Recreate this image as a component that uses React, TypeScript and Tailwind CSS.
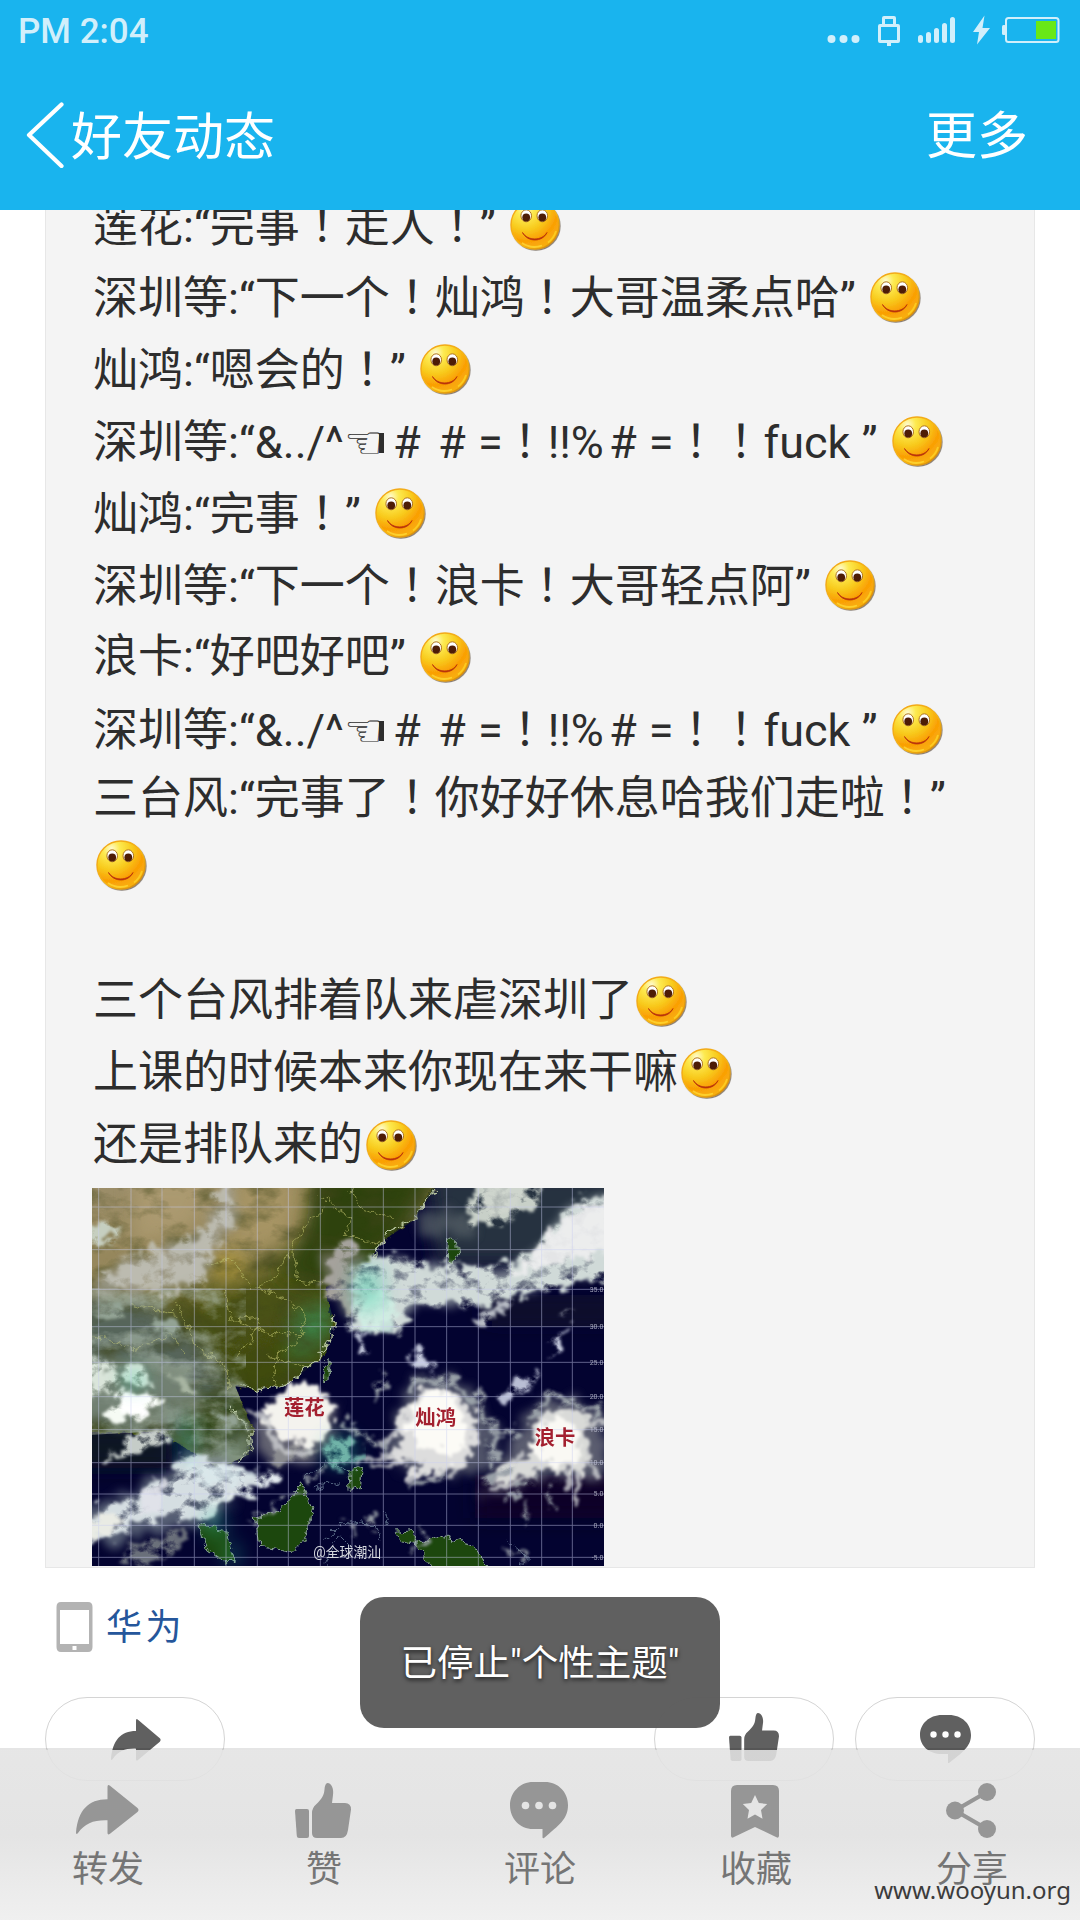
import React from "react";

const CJK = 'font-["Roboto","Noto_Sans_CJK_SC",sans-serif]';

/* ---------- status bar ---------- */

function StatusBar() {
  return (
    <div className="flex h-[60px] items-center justify-between pl-[18px] pr-[19px] pt-[2px] text-[#d1effb]">
      <span className="text-[35px] font-medium leading-none">PM 2:04</span>
      <svg width="234" height="34" viewBox="0 0 234 34" fill="currentColor">
        <circle cx="4.5" cy="25" r="4" />
        <circle cx="16.5" cy="25" r="4" />
        <circle cx="28.5" cy="25" r="4" />
        <path fillRule="evenodd" d="M57 2h10q2 0 2 2v6h2q2 0 2 2v15q0 2-2 2h-7v3h-4v-3h-7q-2 0-2-2V12q0-2 2-2h2V4q0-2 2-2zM58 5v5h8V5zM54 13v13h16V13z" />
        <rect x="91" y="21" width="5" height="8" rx="2.5" />
        <rect x="99" y="18" width="5" height="11" rx="2.5" />
        <rect x="107" y="14" width="5" height="15" rx="2.5" />
        <rect x="115" y="9" width="5" height="20" rx="2.5" />
        <rect x="123" y="3" width="5" height="26" rx="2.5" />
        <path d="M157.500 1.500 146 18h6l-2 12.500L163 14h-7.500z" />
        <rect x="175" y="11" width="4" height="10" rx="1.500" />
        <rect x="179" y="4" width="52.500" height="24" rx="2.500" fill="none" stroke="currentColor" strokeWidth="2" />
        <rect x="209" y="7" width="20" height="18" fill="#68e817" />
      </svg>
    </div>
  );
}

function TitleBar() {
  return (
    <div className="flex h-[150px] items-center justify-between pl-[26px] pr-[52px] text-[51px] leading-none text-white">
      <div className="flex items-center">
        <svg width="38" height="66" viewBox="0 0 38 66" fill="none" stroke="#fff" strokeWidth="4.200" strokeLinecap="round" strokeLinejoin="round">
          <path d="M35.500 2.500 3 33l32.500 31" />
        </svg>
        <span className="ml-[7px] pt-[4px]">好友动态</span>
      </div>
      <span className="pt-[3px]">更多</span>
    </div>
  );
}

/* ---------- post text ---------- */

function Smile() {
  return (
    <svg width="54" height="54" viewBox="0 0 54 54" className="shrink-0">
      <defs>
        <radialGradient id="face" cx="0.3" cy="0.16" r="0.88">
          <stop offset="0" stopColor="#fffbd0" />
          <stop offset="0.2" stopColor="#fdea50" />
          <stop offset="0.5" stopColor="#f8ca1c" />
          <stop offset="0.76" stopColor="#fa9f04" />
          <stop offset="1" stopColor="#f8b010" />
        </radialGradient>
        <linearGradient id="rim" x1="0" y1="0" x2="1" y2="1">
          <stop offset="0" stopColor="#f2a51a" />
          <stop offset="0.6" stopColor="#f6b512" />
          <stop offset="1" stopColor="#c87d08" />
        </linearGradient>
        <filter id="drop" x="-10%" y="-10%" width="130%" height="130%">
          <feDropShadow dx="0.8" dy="0.9" stdDeviation="0.7" floodColor="#4b3a2a" floodOpacity="0.7" />
        </filter>
      </defs>
      <circle cx="27" cy="27" r="24" fill="url(#face)" stroke="url(#rim)" strokeWidth="1.400" filter="url(#drop)" />
      <path d="M40 44.500A22 22 0 0 0 48 33" fill="none" stroke="#fdd82a" strokeWidth="1.800" opacity="0.7" />
      <path d="M14 45a22 22 0 0 0 20 2.500" fill="none" stroke="#ffe03a" strokeWidth="1.800" opacity="0.7" />
      <ellipse cx="18.200" cy="17.800" rx="5.300" ry="6" fill="#fff" stroke="#b0731c" strokeWidth="1" />
      <ellipse cx="34.300" cy="17.800" rx="5.300" ry="6" fill="#fff" stroke="#b0731c" strokeWidth="1" />
      <ellipse cx="18.200" cy="19.400" rx="3.900" ry="4" fill="#4d1c06" />
      <ellipse cx="34.300" cy="19.400" rx="3.900" ry="4" fill="#4d1c06" />
      <path d="M14.500 34.500c5 10 20 10 24.500 0-5 8.600-19.500 8.600-24.500 0z" fill="#b9320c" stroke="#b9320c" strokeWidth="0.800" strokeLinejoin="round" />
    </svg>
  );
}

/* Exclamation marks, hashes and the pointing hand sit in full-width cells. */
function Rich({ text }: { text: string }) {
  return (
    <span className="ml-px whitespace-pre pb-[2px]">
      {text.split(/([！＃☜])/).map((part, i) =>
        part === "！" ? (
          <span key={i} className='font-["Noto_Sans_CJK_TC",sans-serif]' lang="zh-TW">{part}</span>
        ) : part === "＃" ? (
          <span key={i} className="inline-block w-[45px] pr-[7px] text-center">#</span>
        ) : part === "☜" ? (
          <span key={i} className='relative inline-block w-[44px] pr-[5px] text-center font-["DejaVu_Sans",sans-serif] leading-none'>
            {part}
            <span className="absolute right-[4px] top-[13px] h-[20px] w-[5px] bg-[#2d2d2d]" />
          </span>
        ) : (
          part
        )
      )}
    </span>
  );
}

function Line({ text }: { text: string }) {
  return (
    <div className="flex h-[72px] items-center">
      <Rich text={text} />
      <span className="ml-px">
        <Smile />
      </span>
    </div>
  );
}

/* ---------- satellite picture ---------- */

const meridians = [20, 117, 210, 307, 402, 496, 589, 685, 780, 874, 969, 1064, 1159, 1255, 1349, 1441];
const parallels: [number, string][] = [
  [57, ""], [185, ""], [304, "35.0"], [416, "30.0"], [523, "25.0"], [626, "20.0"],
  [725, "15.0"], [824, "10.0"], [918, "5.0"], [1012, "0.0"], [1108, "-5.0"],
];

function Satellite() {
  return (
    <svg width="512" height="378" viewBox="0 0 1536 1134" preserveAspectRatio="none" className="block">
      <defs>
        <filter id="cloud" x="-10%" y="-10%" width="120%" height="120%">
          <feTurbulence type="fractalNoise" baseFrequency="0.02 0.026" numOctaves="5" seed="7" result="n" />
          <feDisplacementMap in="SourceGraphic" in2="n" scale="90" xChannelSelector="R" yChannelSelector="G" result="d" />
          <feGaussianBlur in="d" stdDeviation="5" result="b" />
          <feColorMatrix in="n" type="matrix" values="0 0 0 0 1  0 0 0 0 1  0 0 0 0 1  0 0 3.600 0 -0.850" result="m" />
          <feComposite in="b" in2="m" operator="in" />
        </filter>
        <filter id="soft" x="-10%" y="-10%" width="120%" height="120%">
          <feTurbulence type="fractalNoise" baseFrequency="0.034" numOctaves="4" seed="3" result="n" />
          <feDisplacementMap in="SourceGraphic" in2="n" scale="70" xChannelSelector="R" yChannelSelector="G" result="d" />
          <feGaussianBlur in="d" stdDeviation="5.500" />
        </filter>
        <filter id="veil" x="-20%" y="-20%" width="140%" height="140%">
          <feTurbulence type="fractalNoise" baseFrequency="0.02" numOctaves="4" seed="12" result="n" />
          <feDisplacementMap in="SourceGraphic" in2="n" scale="90" xChannelSelector="R" yChannelSelector="G" result="d" />
          <feGaussianBlur in="d" stdDeviation="14" />
        </filter>
        <filter id="streak" x="-10%" y="-10%" width="120%" height="120%">
          <feTurbulence type="fractalNoise" baseFrequency="0.03" numOctaves="3" seed="5" result="n" />
          <feDisplacementMap in="SourceGraphic" in2="n" scale="36" xChannelSelector="R" yChannelSelector="G" result="d" />
          <feGaussianBlur in="d" stdDeviation="4" />
        </filter>
        <filter id="rough" x="-5%" y="-5%" width="110%" height="110%">
          <feTurbulence type="fractalNoise" baseFrequency="0.04" numOctaves="3" seed="9" result="n" />
          <feDisplacementMap in="SourceGraphic" in2="n" scale="34" xChannelSelector="R" yChannelSelector="G" />
        </filter>
        <filter id="grain" x="0" y="0" width="100%" height="100%">
          <feTurbulence type="fractalNoise" baseFrequency="0.009 0.016" numOctaves="5" seed="21" />
          <feColorMatrix type="matrix" values="0 0 0 0 0.05  0 0 0 0 0.06  0 0 0 0 0.01  2.500 0 0 0 -1.100" />
        </filter>
        <filter id="wisps" x="0" y="0" width="100%" height="100%">
          <feTurbulence type="fractalNoise" baseFrequency="0.009 0.014" numOctaves="5" seed="40" />
          <feColorMatrix type="matrix" values="0 0 0 0 0.42  0 0 0 0 0.5  0 0 0 0 0.43  0 3.500 0 0 -1.500" />
        </filter>
        <filter id="haze" filterUnits="userSpaceOnUse" x="-200" y="-200" width="1936" height="1534">
          <feGaussianBlur stdDeviation="28" />
        </filter>
        <linearGradient id="land" x1="0.1" y1="0" x2="0.55" y2="1">
          <stop offset="0" stopColor="#9d8f6c" />
          <stop offset="0.34" stopColor="#938455" />
          <stop offset="0.5" stopColor="#4d5313" />
          <stop offset="1" stopColor="#2f420d" />
        </linearGradient>
        <clipPath id="landClip">
          <path d="M0 0H1030L960 100 870 160 830 220 700 300 725 400 700 500 600 580 500 605 430 595 480 720 470 800 380 840 280 780 200 730 0 740z" />
        </clipPath>
      </defs>

      <rect width="1536" height="1134" fill="#030330" />
      <path d="M1000-60h600v290H1040z" fill="#283040" filter="url(#haze)" />
      <path d="M1150 860h446v130H1150z" fill="#0c0326" filter="url(#haze)" />
      <path d="M1180 340h400v60h-400z" fill="#16162a" filter="url(#haze)" />
      <path d="M-60 720h300v120H-60z" fill="#101222" filter="url(#haze)" />

      {/* land masses */}
      <path d="M-60-60H1060L960 100 870 160 830 220 700 300 725 400 700 500 600 580 500 605 430 595 480 720 470 800 380 840 280 780 200 730-60 740z" fill="url(#land)" filter="url(#rough)" />
      <g clipPath="url(#landClip)">
        <path d="M660-60h400L860 230 700 300 560 260 640 130z" fill="#2f4208" filter="url(#haze)" />
        <path d="M-60 320 150 330 280 420 400 560 500 820 200 760-60 700z" fill="#56655a" filter="url(#haze)" />
        <path d="M280 620h160l30 100-80 60-110-40z" fill="#34491f" filter="url(#haze)" />
        <path d="M130-40h240l-60 160-190 60z" fill="#b8a47a" filter="url(#haze)" opacity="0.6" />
        <path d="M430-20h200l-40 180-180 60z" fill="#ab9868" filter="url(#haze)" opacity="0.8" />
        <path d="M370 200h80v70h-80z" fill="#b39a3a" filter="url(#haze)" />
        <path d="M600 380 720 340v100l-120 90z" fill="#3a8a52" filter="url(#haze)" opacity="0.8" />
        <rect width="1060" height="860" filter="url(#grain)" opacity="0.6" />
      </g>
      <g fill="#1f470c" stroke="#8aa295" strokeWidth="3" filter="url(#rough)">
        <path d="M490 985 560 970 630 890 660 960 640 1050 600 1090 500 1075z" />
        <path d="M320 1010 400 1030 430 1120 400 1125 340 1080z" />
        <path d="M970 1070 1040 1040 1140 1070 1200 1160H1040z" />
        <path d="M910 1030 960 1025 970 1070 920 1060z" />
        <path d="M1070 150 1095 155 1100 200 1085 230 1065 220z" />
        <path d="M770 850 810 840 805 900 775 910z" />
        <path d="M695 530 715 520 710 580 690 590z" />
      </g>

      {/* borders and coast lines */}
      <g fill="none" stroke="#b9bd6a" strokeWidth="2.600" opacity="0.75" filter="url(#rough)">
        <path d="M250 340 300 440 310 480 400 530 410 600M400 310 420 400 500 390 480 460 430 500M500 300 580 330 640 380 620 460 560 500 540 600M600 180 620 280 700 290M330 240 420 210 480 310M440 400 540 440 640 440M590 180 560 260 500 300M520 500 640 540" />
        <path d="M680 20 780 90 760 140 870 170M700 60 640 110 600 180M780 0 800 60 900 90" />
        <path d="M0 440 120 480 240 440 280 500M120 350 250 380" />
      </g>
      <path d="M1030 0 960 100 890 130 840 220M725 380 720 450 670 520 600 580 510 605 440 590M410 660 470 710 480 780 430 830" fill="none" stroke="#b8c6a0" strokeWidth="4" filter="url(#rough)" />
      <path d="M690 1060 760 1000 850 1010 870 1060M700 1130 740 1040 780 1080M640 870 700 820 770 850M1250 1060 1310 1110 1280 1134M880 970 890 1010M660 900 740 880" fill="none" stroke="#7c93a8" strokeWidth="3" opacity="0.7" filter="url(#rough)" />

      {/* thin cloud over the south-western land */}
      <g clipPath="url(#landClip)">
        <rect y="300" width="460" height="540" filter="url(#wisps)" opacity="0.6" />
      </g>

      {/* translucent cloud base */}
      <g filter="url(#veil)" opacity="0.72">
        <path d="M390-30 430-30 420 100 360 190 320 280 200 300 20 310 0 280 150 200 300 160 370 80z" fill="#a9a8a0" />
        <path d="M790 250 880 210 1000 240 1150 250 1270 240 1360 150 1440 60 1580 10V240L1400 280 1180 340 960 350 930 400 860 430 780 410z" fill="#a9b4b6" />
        <path d="M700 190 800 170 790 400 730 330 690 270z" fill="#86837d" />
        <path d="M-30 500 200 520 240 700 60 700-30 680z" fill="#7c8a7c" />
        <path d="M-30 970 130 900 240 850 290 780 440 830 440 920 340 1010 60 1060-30 1060z" fill="#76828e" />
        <path d="M930 610 1030 560 1150 610 1220 780 1180 850 960 860 880 820z" fill="#6f7480" />
        <path d="M1280 720 1340 640 1450 630 1560 690 1530 880 1380 860 1180 910 1220 850z" fill="#7d8088" />
        <path d="M480 700 560 640 740 640 720 760 640 820 520 820z" fill="#88888a" />
        <path d="M950 90 1120 60 1150 150 1000 150z" fill="#566068" />
        <path d="M180 520 280 540 340 660 260 680z" fill="#7d8b7b" />
        <path d="M370 760 460 740 460 800 400 820z" fill="#7f9482" />
      </g>

      {/* clouds */}
      <g filter="url(#cloud)">
        <path d="M390-30 430-30 420 100 370 180 320 290 230 310 60 300 30 260 150 190 300 160 370 80z" fill="#c3c3ba" opacity="0.8" />
        <path d="M-30 110 90 100 50 160-30 180z" fill="#c6cfc0" />
        <path d="M720 170 800 160 790 400 740 330 690 300z" fill="#a5a29c" />
        <path d="M790 240 880 190 1000 230 1150 240 1270 230 1360 140 1440 50 1580 0V260L1400 300 1180 350 960 350 930 410 860 440 770 420z" fill="#d0dad8" />
        <path d="M1160-30h200l-30 80-160 80-50-40z" fill="#c8d0c8" />
        <path d="M1150 390 1280 330 1250 370 1160 400zM1400 380l60-20-40 30z" fill="#b7bcc5" />
        <path d="M1210 620 1290 570 1320 540 1320 600 1230 650z" fill="#b9bed4" />
        <path d="M940 500 1010 510 1020 550 970 530zM800 440l20 0 5 60-20 0zM1370 460 1440 420 1380 500z" fill="#c8cde0" />
        <path d="M-20 510 80 540 60 620-20 640zM100 520 180 530 180 590 90 590z" fill="#dae5da" />
        <path d="M40 690 90 610 210 640 160 700z" fill="#f6fbf4" />
        <path d="M40 820 120 740 260 700 200 780z" fill="#c5ccc8" />
        <path d="M-20 980 120 920 240 860 280 790 420 830 560 870 540 900 420 930 350 980 250 990 150 1000 60 1060-20 1050z" fill="#d5dee2" />
        <path d="M540 800 640 760 690 790 560 830z" fill="#8a8b8f" />
        <path d="M60 1110 220 1040 300 1010 240 1090 180 1134H80z" fill="#6a6f7a" />
        <path d="M220 540 280 560 330 640 290 620z" fill="#a8b5a2" />
        <path d="M370 670 430 680 470 720 400 720zM20 350 90 350 100 400 20 400zM180 390 270 410 270 450 200 430z" fill="#93a394" />
      </g>
      <g filter="url(#soft)">
        <path d="M800 340 870 310 920 370 890 430 810 420z" fill="#d4efe6" opacity="0.9" />
        <path d="M1360 150 1450 60 1580 20V190L1380 220 1260 270z" fill="#eeeeef" opacity="0.9" />
        <path d="M1170-30h150l-40 90-90 40z" fill="#cfd6ce" opacity="0.8" />
        <path d="M530 650 590 590 690 590 730 650 710 730 650 780 560 740 510 710z" fill="#f4f3ee" />
        <path d="M290 830 420 840 510 850 430 880 330 890z" fill="#dcebee" opacity="0.7" />
        <path d="M500 880l60-20-10 30z" fill="#e8eef4" />
        <path d="M370 930 435 905 430 930 360 960z" fill="#e6eeee" />
        <path d="M-20 1000 70 980 100 1000 30 1050-20 1050z" fill="#e9ebe4" />
        <path d="M150 900 215 880 210 970 150 980z" fill="#e1e2ea" opacity="0.9" />
        <path d="M90 620 180 630 160 680 90 680z" fill="#fff" />
      </g>

      {/* the three storms */}
      <g fill="none" stroke="#d0d2d4" strokeLinecap="round" filter="url(#streak)" opacity="0.8">
        <path d="M960 780Q900 800 800 822M980 800Q900 840 840 832M1020 820Q990 860 950 880M1060 830Q1050 860 1010 870M1100 820Q1090 850 1070 870M930 700Q910 740 870 770M1340 820Q1270 830 1200 880M1350 840Q1290 880 1200 905M1460 840Q1460 900 1450 940M1480 800Q1500 840 1520 870M1430 850V900M1290 800Q1250 830 1210 870M1490 710 1550 700M560 770Q600 800 650 800M530 700Q520 740 560 780M520 690 470 670" strokeWidth="15" />
      </g>
      <g filter="url(#soft)">
        <path d="M945 660 990 600 1080 600 1140 670 1165 760 1120 830 1050 850 940 880 990 820 890 820 920 770 900 700z" fill="#dddddd" />
        <path d="M980 640 1010 600 1065 608 1110 680 1130 760 1080 810 980 760 940 720z" fill="#fcfbf6" />
        <path d="M1320 720 1340 680 1430 660 1520 690 1475 720 1490 790 1475 880 1440 850 1370 840 1280 870 1200 890 1250 830 1330 790z" fill="#d9dad8" />
        <path d="M1340 710 1410 680 1460 730 1460 820 1380 830 1320 790z" fill="#faf9f4" />
      </g>
      <g fill="none" stroke="#9aa1a8" filter="url(#cloud)">
        <path d="M950 620Q1010 545 1100 590T1200 740 1190 840" strokeWidth="22" />
        <path d="M1310 690Q1360 610 1440 640T1536 700" strokeWidth="24" />
        <path d="M760 690 810 750 900 790M1180 890 1270 830M960 900 1060 850M1240 920 1320 880M870 560 860 640M1200 700 1260 740" strokeWidth="18" />
        <path d="M640 890 700 830M480 1000 620 900M760 1000l30 60M960 1100l40-60M830 980l20 50M1240 1080l60 40M1300 940l10 60M1370 900l20 80" strokeWidth="11" />
      </g>
      <g fill="#2fc9a0" filter="url(#haze)" opacity="0.42">
        <path d="M780 240h90v120h-90z" />
        <path d="M700 750h90v80h-90z" />
        <path d="M265 700h40v110h-40z" />
        <path d="M340 970h60v70h-60z" />
        <path d="M90 550h70v50H90z" />
        <path d="M400 1070h40v60h-40z" />
      </g>
      <path d="M690 770 780 740 810 830 730 850z" fill="#6fb3a8" filter="url(#cloud)" />

      {/* graticule */}
      <g stroke="#c9cdf0" strokeWidth="2.800" opacity="0.5">
        {meridians.map((x) => (
          <line key={x} x1={x} x2={x} y1="0" y2="1134" />
        ))}
        {parallels.map(([y]) => (
          <line key={y} x1="0" x2="1536" y1={y} y2={y} />
        ))}
      </g>
      <g fill="#c4c6d6" fontFamily="Roboto, sans-serif" fontSize="21" textAnchor="end" opacity="0.8">
        {parallels.map(([y, t]) => (
          <text key={y} x="1534" y={y + 7}>{t}</text>
        ))}
      </g>

      <g fontFamily="'Noto Sans CJK SC', sans-serif" fontWeight="700" fontSize="61" fill="#a3202f">
        <text x="576" y="680">莲花</text>
        <text x="970" y="710">灿鸿</text>
        <text x="1328" y="772">浪卡</text>
      </g>
      <text x="664" y="1108" fontFamily="Roboto, 'Noto Sans CJK SC', sans-serif" fontSize="41.500" fill="#d5d8de">@全球潮汕</text>
    </svg>
  );
}

/* ---------- action icons ---------- */

function ForwardIcon({ className }: { className: string }) {
  return (
    <svg viewBox="0 0 63 51" className={className} fill="currentColor" preserveAspectRatio="none">
      <path d="M31.500 2q0-3 2.500-1.200L61.500 23.500q2 2 0 4L34 49.800q-2.500 1.700-2.500-1V36C18 35.500 9 39 2 49q-2 2-2-.5C2 26 12 14.500 31.500 14.500z" />
    </svg>
  );
}

function LikeIcon({ className }: { className: string }) {
  return (
    <svg viewBox="0 0 56 55" className={className} fill="currentColor" preserveAspectRatio="none">
      <path d="M1.500 26H12q2 0 2 2v25q0 2-2 2H4q-2 0-2.200-2L0 28q0-2 1.500-2z" />
      <path d="M17 30q0-5 4-8.500c6-6 8-9 8.500-15Q30 0 32.500 0c4 0 6.500 6 5.500 12l-1 8h13q6 0 6 6.500L53 47q-1.200 8-7 8H22q-5 0-5-5z" />
    </svg>
  );
}

function CommentIcon({ className, dot }: { className: string; dot: string }) {
  return (
    <svg viewBox="0 0 58 57" className={className} fill="currentColor" preserveAspectRatio="none">
      <path d="M23 0h12c13 0 23 10 23 23 0 14-9 20-24 33q-1.500 1-1.500-1v-8H23C10 47 0 36.500 0 23.500S10 0 23 0z" />
      <g fill={dot}>
        <circle cx="15.500" cy="23.500" r="3.800" />
        <circle cx="29" cy="23.500" r="3.800" />
        <circle cx="42.500" cy="23.500" r="3.800" />
      </g>
    </svg>
  );
}

/* Rounder balloon used inside the pills. */
function BalloonIcon({ className }: { className: string }) {
  return (
    <svg viewBox="0 0 51 48" className={className} fill="currentColor">
      <path d="M22 0h7c13 0 22 9 22 20 0 10-6 16-22 28q-1 .5-1-.5V39h-6C9 39 0 31 0 20S9 0 22 0z" />
      <g fill="#fff">
        <circle cx="13.500" cy="19.500" r="3.200" />
        <circle cx="25.500" cy="19.500" r="3.200" />
        <circle cx="37.500" cy="19.500" r="3.200" />
      </g>
    </svg>
  );
}

function BookmarkIcon({ className }: { className: string }) {
  return (
    <svg viewBox="0 0 48 53" className={className} fill="currentColor">
      <path fillRule="evenodd" d="M6 0h36q6 0 6 6v44.500q0 3-2.500 1.800L24 42 2.500 52.300Q0 53.500 0 50.500V6q0-6 6-6zM24 10l-3.800 8-8.400 1 6.200 6-1.500 8.800L24 29.500l7.500 4.300L30 25l6.200-6-8.400-1z" />
    </svg>
  );
}

function ShareIcon({ className }: { className: string }) {
  return (
    <svg viewBox="0 0 50 55" className={className} fill="currentColor">
      <path d="M9 27.500 41 9M9 27.500 41 46" stroke="currentColor" strokeWidth="4.200" />
      <circle cx="9" cy="27.500" r="9" />
      <circle cx="41" cy="9" r="9" />
      <circle cx="41" cy="46" r="9" />
    </svg>
  );
}

function Pill({ children, className = "" }: { children: React.ReactNode; className?: string }) {
  return (
    <div className={`flex h-[84px] w-[180px] justify-center rounded-[42px] border border-[#d4d4d4] text-[#606060] ${className}`}>
      {children}
    </div>
  );
}

const actions = [
  { label: "转发", icon: <ForwardIcon className="mt-[2px] h-[50px] w-[63px]" /> },
  { label: "赞", icon: <LikeIcon className="h-[55px] w-[56px]" /> },
  { label: "评论", icon: <CommentIcon className="-mt-px h-[57px] w-[58px]" dot="#e4e4e4" /> },
  { label: "收藏", icon: <BookmarkIcon className="mt-[2px] h-[53px] w-[48px]" /> },
  { label: "分享", icon: <ShareIcon className="h-[55px] w-[50px]" /> },
];

export default function App() {
  return (
    <div className={`relative flex h-[1920px] w-[1080px] flex-col overflow-hidden bg-white ${CJK}`}>
      <header className="z-10 h-[210px] shrink-0 bg-[#19b4ee]">
        <StatusBar />
        <TitleBar />
      </header>

      <main className="flex h-[1710px] flex-col overflow-hidden px-[45px]">
        <article className="h-[1358px] shrink-0 overflow-hidden border border-t-0 border-[#e7e7e7] bg-[#f4f4f4] pl-[46px] text-[45px] leading-none text-[#2d2d2d]">
          <div className="-mt-[21px]">
            <Line text="莲花:“完事！走人！” " />
            <Line text="深圳等:“下一个！灿鸿！大哥温柔点哈” " />
            <Line text="灿鸿:“嗯会的！” " />
            <Line text="深圳等:“&../^☜＃＃=！!!%＃=！！fuck ” " />
            <Line text="灿鸿:“完事！” " />
            <Line text="深圳等:“下一个！浪卡！大哥轻点阿” " />
            <Line text="浪卡:“好吧好吧” " />
            <Line text="深圳等:“&../^☜＃＃=！!!%＃=！！fuck ” " />
            <div className="flex h-16 items-center">
              <Rich text="三台风:“完事了！你好好休息哈我们走啦！”" />
            </div>
            <div className="mb-16">
              <Line text="" />
            </div>
            <Line text="三个台风排着队来虐深圳了" />
            <Line text="上课的时候本来你现在来干嘛" />
            <Line text="还是排队来的" />
            <div className="mt-[7px]">
              <Satellite />
            </div>
          </div>
        </article>

        <div className="mt-[33px] flex h-[52px] items-center pl-[11px]">
          <svg width="37" height="52" viewBox="0 0 37 52">
            <path fillRule="evenodd" fill="#b3b3b3" d="M5 1h27q4.500 0 4.500 5v40q0 5-4.500 5H5Q.5 51 .5 46V6Q.5 1 5 1zM4 9v34h29V9zM16.500 45v4h4v-4z" />
          </svg>
          <span className="ml-[13px] pt-px text-[36px] leading-none tracking-[3.500px] text-[#25569b]">华为</span>
        </div>

        <div className="mt-[44px] flex">
          <Pill>
            <ForwardIcon className="ml-px mt-[21px] h-[42px] w-[50px]" />
          </Pill>
          <Pill className="ml-auto">
            <LikeIcon className="ml-[20px] mt-[15px] h-[48px] w-[50px]" />
          </Pill>
          <Pill className="ml-[21px]">
            <BalloonIcon className="mt-[17px] h-[48px] w-[51px]" />
          </Pill>
        </div>
      </main>

      <nav className="absolute inset-x-0 bottom-0 grid h-[172px] grid-cols-5 border-t-2 border-black/10 bg-gradient-to-b from-[#e3e3e3]/88 via-[#e1e1e1]/90 to-[#eeeeee]/90 bg-clip-padding pt-[33px] text-[#757575]">
        {actions.map((a) => (
          <div key={a.label} className="flex flex-col items-center">
            <div className="h-[65px] pr-[2px] text-[#969696]">{a.icon}</div>
            <span className="mt-[4px] text-[36px] leading-none">{a.label}</span>
          </div>
        ))}
      </nav>

      <div className='absolute bottom-[18px] right-[9px] font-["Noto_Sans",sans-serif] text-[24px] leading-none text-[#3c3c3c]'>
        www.wooyun.org
      </div>

      <div className="absolute left-[360px] top-[1597px] flex h-[131px] w-[360px] items-center justify-center rounded-[24px] bg-[#5b5b5b]/97 pt-[4px] text-[36.5px] leading-none text-white [text-shadow:0_2px_4px_rgba(0,0,0,0.7)]">
        已停止"个性主题"
      </div>
    </div>
  );
}
